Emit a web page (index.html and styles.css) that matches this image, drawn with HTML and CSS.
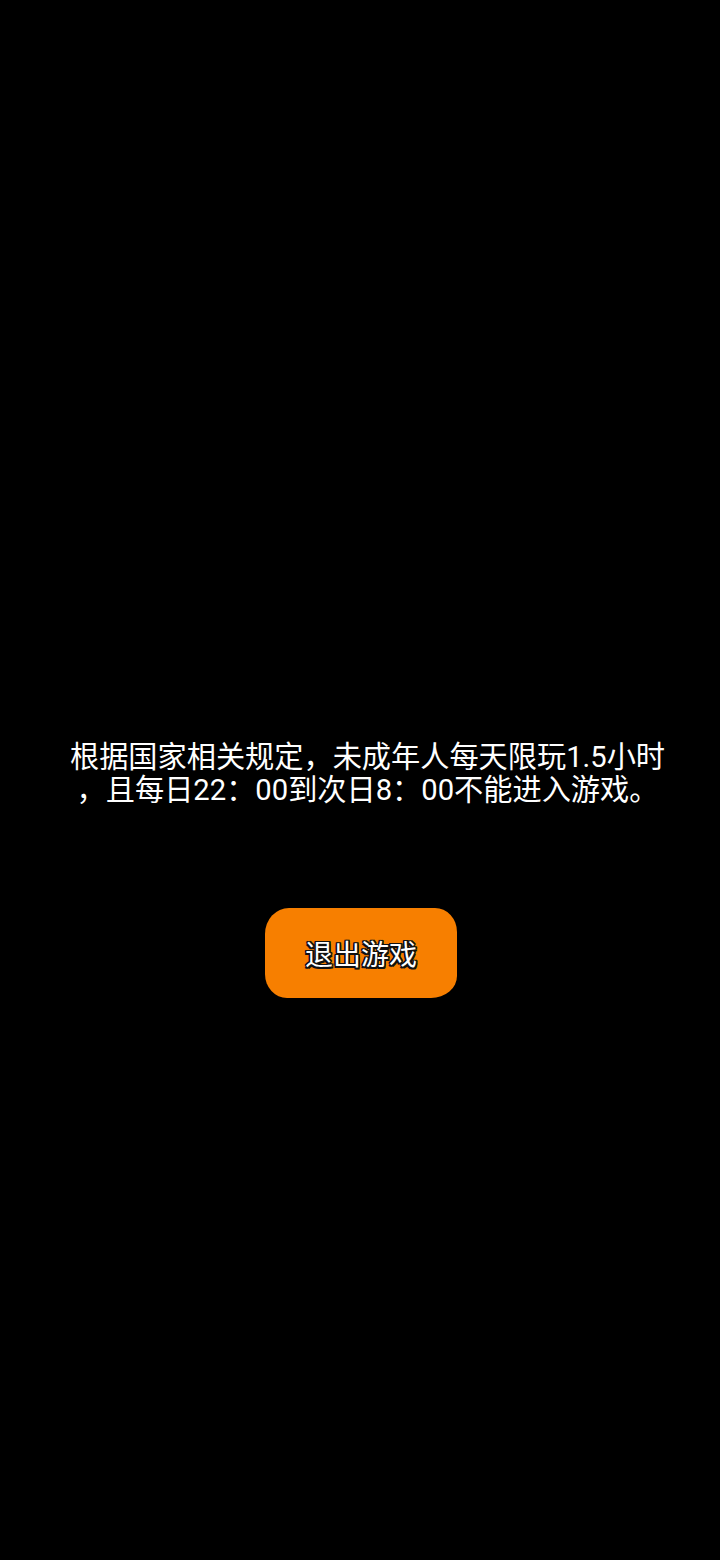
FILE: index.html
```html
<!DOCTYPE html>
<html lang="zh-CN">
<head>
<meta charset="utf-8">
<link rel="stylesheet" href="styles.css">
</head>
<body>
<main class="screen">
  <div class="notice">
    <p class="line">根据国家相关规定，未成年人每天限玩1.5小时</p>
    <p class="line">，且每日22：00到次日8：00不能进入游戏。</p>
  </div>
  <button class="exit-btn">退出游戏</button>
</main>
</body>
</html>
```

FILE: styles.css
```css
html, body {
  margin: 0;
  padding: 0;
  background: #000;
}
.screen {
  width: 720px;
  height: 1560px;
  display: flex;
  flex-direction: column;
  align-items: center;
  box-sizing: border-box;
  padding-top: 741px;
  font-family: Roboto, "Noto Sans CJK SC", sans-serif;
  color: #fff;
}
.notice {
  display: flex;
  flex-direction: column;
  align-items: center;
  padding-left: 15px;
}
.line {
  margin: 0;
  font-size: 29.2px;
  line-height: 33px;
  white-space: nowrap;
}
.exit-btn {
  margin-top: 101px;
  margin-left: 2px;
  width: 192px;
  height: 90px;
  border: none;
  border-radius: 24px 22px 26px 22px / 26px 24px 22px 24px;
  background: #f77f00;
  color: #fff;
  font-family: "Noto Sans CJK SC", sans-serif;
  font-size: 28px;
  padding: 0;
  text-shadow: -1.5px -1.5px 0 #111, 1.5px -1.5px 0 #111, -1.5px 1.5px 0 #111, 1.5px 1.5px 0 #111, 0 1.5px 0 #111, 0 -1.5px 0 #111, 1.5px 0 0 #111, -1.5px 0 0 #111;
}
```
